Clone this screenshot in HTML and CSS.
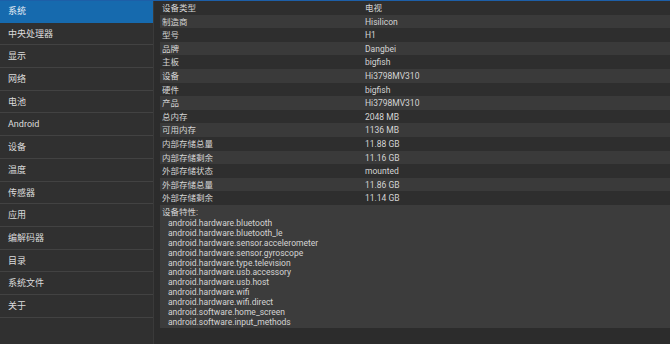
FILE: index.html
```html
<!DOCTYPE html>
<html>
	<head>
		<title>设备信息</title>
		<meta charset="UTF-8">
		<link rel="stylesheet" href="styles.css">
	</head>
	<body class="cadru">
		<div class="meniu">
			<div class="item activ">系统</div>
			<div class="item">中央处理器</div>
			<div class="item">显示</div>
			<div class="item">网络</div>
			<div class="item">电池</div>
			<div class="item">Android</div>
			<div class="item">设备</div>
			<div class="item">温度</div>
			<div class="item">传感器</div>
			<div class="item">应用</div>
			<div class="item">编解码器</div>
			<div class="item">目录</div>
			<div class="item">系统文件</div>
			<div class="item">关于</div>
		</div>
		<div class="continut">
			<div class="rand"><span class="eticheta">设备类型</span><span>电视</span></div>
			<div class="rand"><span class="eticheta">制造商</span><span>Hisilicon</span></div>
			<div class="rand"><span class="eticheta">型号</span><span>H1</span></div>
			<div class="rand"><span class="eticheta">品牌</span><span>Dangbei</span></div>
			<div class="rand"><span class="eticheta">主板</span><span>bigfish</span></div>
			<div class="rand"><span class="eticheta">设备</span><span>Hi3798MV310</span></div>
			<div class="rand"><span class="eticheta">硬件</span><span>bigfish</span></div>
			<div class="rand"><span class="eticheta">产品</span><span>Hi3798MV310</span></div>
			<div class="rand"><span class="eticheta">总内存</span><span>2048 MB</span></div>
			<div class="rand"><span class="eticheta">可用内存</span><span>1136 MB</span></div>
			<div class="rand"><span class="eticheta">内部存储总量</span><span>11.88 GB</span></div>
			<div class="rand"><span class="eticheta">内部存储剩余</span><span>11.16 GB</span></div>
			<div class="rand"><span class="eticheta">外部存储状态</span><span>mounted</span></div>
			<div class="rand"><span class="eticheta">外部存储总量</span><span>11.86 GB</span></div>
			<div class="rand"><span class="eticheta">外部存储剩余</span><span>11.14 GB</span></div>
			<div class="caracteristici">
				<div class="titlu">设备特性:</div>
				<div class="lista">
					<div>android.hardware.bluetooth</div>
					<div>android.hardware.bluetooth_le</div>
					<div>android.hardware.sensor.accelerometer</div>
					<div>android.hardware.sensor.gyroscope</div>
					<div>android.hardware.type.television</div>
					<div>android.hardware.usb.accessory</div>
					<div>android.hardware.usb.host</div>
					<div>android.hardware.wifi</div>
					<div>android.hardware.wifi.direct</div>
					<div>android.software.home_screen</div>
					<div>android.software.input_methods</div>
				</div>
			</div>
		</div>
	</body>
</html>
```

FILE: styles.css
```css
body, html {
	height: 100%;
}
.cadru {
	margin: 0;
	display: flex;
	background-color: #2c2c2c;
	font-family: "Roboto", "Noto Sans CJK SC", sans-serif;
	color: #d4d4d4;
	border-top: 1px solid #1d5fa8;
	box-sizing: border-box;
	overflow: hidden;
}
.meniu {
	width: 153px;
	background-color: #303030;
	border-right: 1px solid #3a3a3a;
	margin-top: -1px;
}
.item {
	height: 19.7px;
	line-height: 19.7px;
	padding-top: 2px;
	border-bottom: 1px solid #424242;
	padding-left: 8px;
	font-size: 9px;
	color: #dcdcdc;
}
.item.activ {
	background-color: #166aae;
	border-bottom-color: #166aae;
	color: #e8eef5;
}
.continut {
	flex: 1;
	margin-left: 6px;
	background-color: #2c2c2c;
}
.rand {
	display: flex;
	height: 13.6px;
	line-height: 14.4px;
	font-size: 8.5px;
	background-color: #2e2e2e;
}
.rand:nth-child(even) {
	background-color: #3a3a3a;
}
.eticheta {
	width: 203px;
	padding-left: 2px;
}
.caracteristici {
	background-color: #3c3c3c;
	height: 123px;
	font-size: 8.5px;
}
.titlu {
	padding-left: 2px;
	line-height: 14px;
}
.lista {
	padding-left: 8px;
	line-height: 9.9px;
}
```
